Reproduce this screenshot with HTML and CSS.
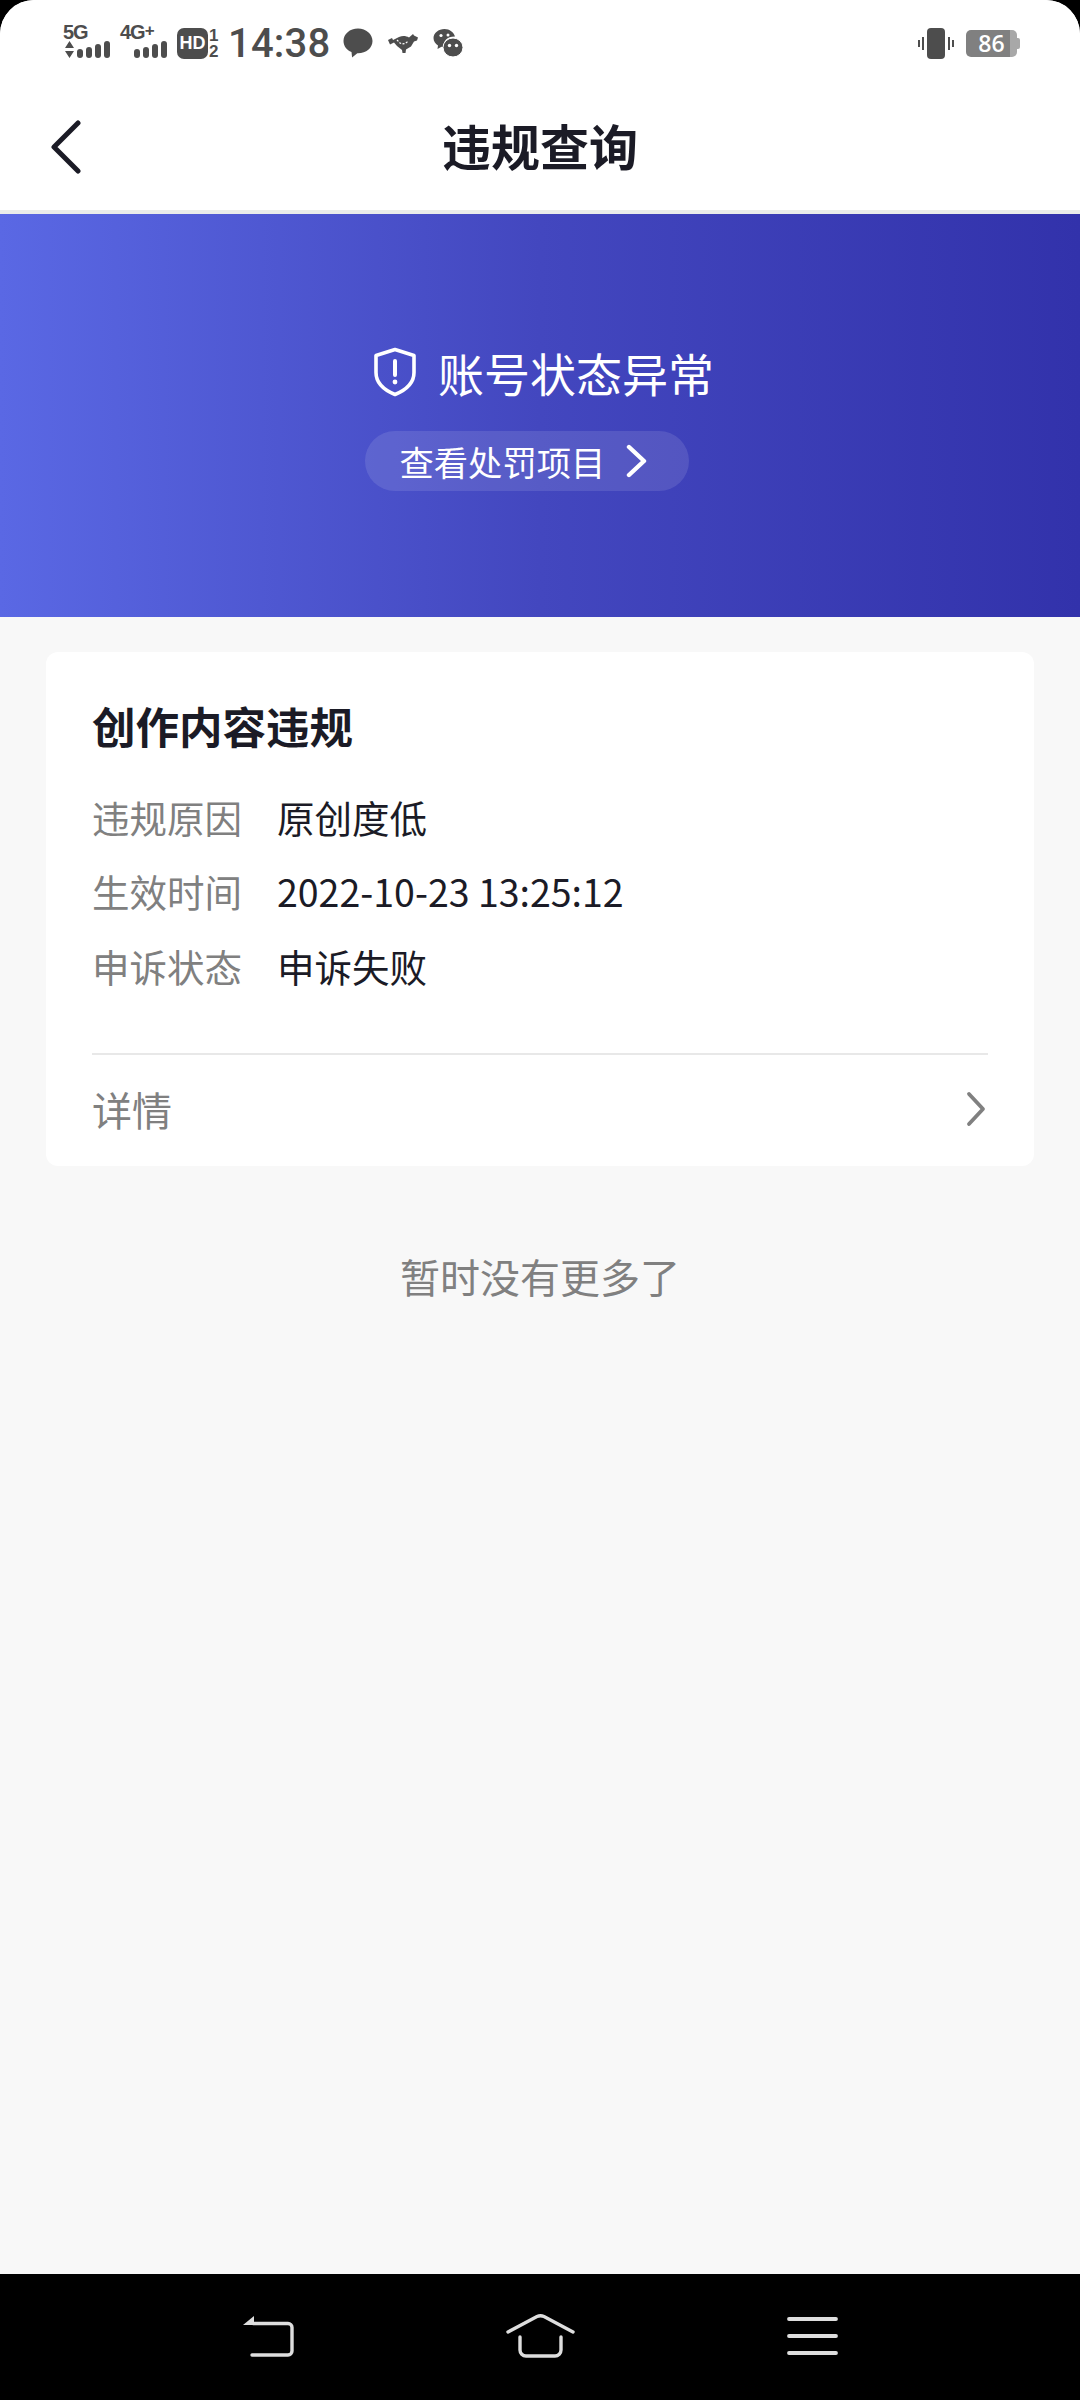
FILE: index.html
```html
<!DOCTYPE html>
<html lang="zh-CN">
<head>
    <meta charset="UTF-8">
    <meta name="viewport" content="width=device-width, initial-scale=1.0">
    <title>违规查询</title>
    <link rel="stylesheet" href="styles.css">
</head>
<body>
    <div class="screen">
        <div class="status-bar">
            <div class="status-left">
                <div class="signal signal-5g">
                    <span class="net">5G</span>
                    <div class="bars">
                        <svg class="updown" width="9" height="17" viewBox="0 0 9 17"><path d="M4.500 0L9 7H0zM0 10h9l-4.500 7z" fill="#4d4d4d"/></svg>
                        <i class="b1"></i><i class="b2"></i><i class="b3"></i><i class="b4"></i>
                    </div>
                </div>
                <div class="signal signal-4g">
                    <span class="net">4G<sup>+</sup></span>
                    <div class="bars">
                        <i class="b1"></i><i class="b2"></i><i class="b3"></i><i class="b4"></i>
                    </div>
                </div>
                <span class="hd">HD</span>
                <div class="sim"><span>1</span><span>2</span></div>
                <span class="time">14:38</span>
                <svg class="note-icon bubble" width="30" height="30" viewBox="0 0 30 30"><path d="M15 .5C6.800.5.500 6 .500 13c0 5 3.200 9 8 11l.6 5.500 5.200-4.200h.700c8.200 0 14.500-5.400 14.500-12.300S23.200.5 15 .5z" fill="#4d4d4d"/></svg>
                <svg class="note-icon hand" width="30" height="22" viewBox="0 0 30 22"><path d="M0 7l4-2 1 2 6-3c4-1.500 7-1 10 .5L25 1l1 1.500 4 2-1 3-3 1-3 5-5 3-.5 3.500h-3L14 17l-5-4-3-3.500-4 2z" fill="#4d4d4d"/><path d="M9 7l3 3 2 1 3-.5 3-2" fill="none" stroke="#fff" stroke-width="1.200" stroke-dasharray="2 1.500"/></svg>
                <svg class="note-icon wechat" width="30" height="30" viewBox="0 0 30 30"><path d="M11.500 1C5.500 1 .5 5 .5 10c0 3 1.800 5.600 4.500 7.400L4.500 21l4-2.200c.7.200 1.500.3 2.400.3C10 13 14 8.500 22 8.600 20.800 4.200 16.600 1 11.500 1z" fill="#4d4d4d"/><ellipse cx="20" cy="19.500" rx="10" ry="9.500" fill="#4d4d4d" stroke="#fff" stroke-width="1"/><circle cx="16.500" cy="17.500" r="1.700" fill="#fff"/><circle cx="23.500" cy="17.500" r="1.700" fill="#fff"/><circle cx="8" cy="7.500" r="1.600" fill="#fff"/><circle cx="15" cy="7" r="1.500" fill="#fff"/></svg>
            </div>
            <div class="status-right">
                <svg width="36" height="31" viewBox="0 0 36 31"><rect x="9" y="0" width="18" height="31" rx="4" fill="#4d4d4d"/><path d="M5 9v13M1 12v7M31 9v13M35 12v7" stroke="#4d4d4d" stroke-width="2" fill="none"/></svg>
                <div class="battery"><span class="battery-num">86</span><i class="battery-cap"></i></div>
            </div>
        </div>

        <div class="title-bar">
            <svg class="back" width="32" height="54" viewBox="0 0 32 54"><path d="M28 3L4 27l24 24" fill="none" stroke="#1b1b26" stroke-width="5" stroke-linecap="round" stroke-linejoin="round"/></svg>
            <h1>违规查询</h1>
        </div>

        <div class="banner">
            <div class="banner-title">
                <svg width="44" height="50" viewBox="0 0 44 50"><path d="M22 2.500l19 6v17c0 10-8 17.500-19 22-11-4.500-19-12-19-22v-17z" fill="none" stroke="#fff" stroke-width="3.600" stroke-linejoin="round"/><path d="M22 14v14" stroke="#fff" stroke-width="4" stroke-linecap="round"/><circle cx="22" cy="35" r="2.400" fill="#fff"/></svg>
                <span>账号状态异常</span>
            </div>
            <div class="banner-pill">
                <span>查看处罚项目</span>
                <svg width="22" height="34" viewBox="0 0 22 34"><path d="M3 3l15 14L3 31" fill="none" stroke="#fff" stroke-width="4.400" stroke-linecap="round" stroke-linejoin="round"/></svg>
            </div>
        </div>

        <div class="content">
            <div class="card">
                <div class="card-body">
                    <h2>创作内容违规</h2>
                    <div class="row"><span class="label">违规原因</span><span class="value">原创度低</span></div>
                    <div class="row"><span class="label">生效时间</span><span class="value">2022-10-23 13:25:12</span></div>
                    <div class="row"><span class="label">申诉状态</span><span class="value">申诉失败</span></div>
                </div>
                <div class="card-foot">
                    <span>详情</span>
                    <svg class="foot-arrow" width="20" height="36" viewBox="0 0 20 36"><path d="M3 3l14 15L3 33" fill="none" stroke="#808080" stroke-width="3.800" stroke-linecap="round" stroke-linejoin="round"/></svg>
                </div>
            </div>
            <p class="no-more">暂时没有更多了</p>
        </div>

        <div class="nav-bar">
            <svg width="51" height="41" viewBox="0 0 51 41"><path d="M0 9L11 0v9z" fill="#dedede"/><path d="M10 7.500h35a4 4 0 0 1 4 4V35a4 4 0 0 1-4 4H9" fill="none" stroke="#dedede" stroke-width="3.400" stroke-linecap="round"/></svg>
            <svg width="69" height="44" viewBox="0 0 69 44"><path d="M2 18L31 2.500q3.500-1.500 7 0L67 18" fill="none" stroke="#dedede" stroke-width="3.400" stroke-linecap="round"/><path d="M14 23v13a6 6 0 0 0 6 6h29a6 6 0 0 0 6-6V23" fill="none" stroke="#dedede" stroke-width="3.400" stroke-linecap="round"/></svg>
            <svg width="51" height="38" viewBox="0 0 51 38"><path d="M2 2h47M2 19h47M2 36h47" fill="none" stroke="#dedede" stroke-width="3.800" stroke-linecap="round"/></svg>
        </div>
    </div>
</body>
</html>
```

FILE: styles.css
```css
* {
    box-sizing: border-box;
}
html, body {
    margin: 0;
    padding: 0;
    background-color: #000;
}
body {
    font-family: "Noto Sans CJK SC", "Noto Sans", sans-serif;
    color: #1b1b26;
}
.screen {
    width: 1080px;
    height: 2400px;
    display: flex;
    flex-direction: column;
    background-color: #f8f8f8;
    border-radius: 34px 34px 0 0;
    overflow: hidden;
}

/* status bar */
.status-bar {
    height: 85px;
    background-color: #fff;
    display: flex;
    justify-content: space-between;
    align-items: flex-start;
    padding: 22px 63px 0 63px;
    color: #4d4d4d;
}
.status-left {
    display: flex;
    align-items: flex-start;
}
.status-right {
    display: flex;
    align-items: center;
    gap: 12px;
    padding-top: 6px;
}
.signal {
    display: flex;
    flex-direction: column;
    width: 47px;
    font-family: "Liberation Sans", Arial, sans-serif;
    font-weight: 700;
}
.signal-4g {
    margin-left: 10px;
}
.net {
    font-size: 20px;
    letter-spacing: -1px;
    line-height: 17px;
    height: 17px;
    margin-top: 2px;
    white-space: nowrap;
}
.net sup {
    font-size: 17px;
    line-height: 0;
    vertical-align: 3px;
}
.bars {
    display: flex;
    align-items: flex-end;
    justify-content: flex-end;
    gap: 3px;
    height: 17px;
}
.bars i {
    display: block;
    width: 6px;
    background-color: #4d4d4d;
    border-radius: 3px;
}
.bars .b1 { height: 9px; }
.bars .b2 { height: 11px; }
.bars .b3 { height: 14px; }
.bars .b4 { height: 17px; }
.hd {
    width: 31px;
    height: 31px;
    margin-left: 10px;
    margin-top: 6px;
    border-radius: 7px;
    background-color: #4d4d4d;
    color: #fff;
    font-family: "Liberation Sans", Arial, sans-serif;
    font-weight: 700;
    font-size: 18px;
    line-height: 31px;
    text-align: center;
}
.sim {
    display: flex;
    flex-direction: column;
    margin: 6px 0 0 1px;
    width: 11px;
    font-family: "Liberation Sans", Arial, sans-serif;
    font-weight: 700;
    font-size: 17px;
    line-height: 15.500px;
}
.time {
    font-family: Roboto, sans-serif;
    font-weight: 500;
    font-size: 40px;
    letter-spacing: 0.200px;
    line-height: 44px;
    margin-left: 8px;
    width: 101px;
    white-space: nowrap;
}
.note-icon {
    margin-top: 6px;
}
.bubble {
    margin-left: 14px;
}
.hand {
    margin-left: 15px;
    margin-top: 11px;
}
.wechat {
    margin-left: 15px;
}
.battery {
    position: relative;
    width: 51px;
    height: 27px;
    border-radius: 5px;
    background: linear-gradient(to right, #808080 0, #808080 86%, #a8a8a8 86%);
    color: #fff;
    text-align: center;
    font-family: "Open Sans", sans-serif;
    font-weight: 600;
    font-size: 23px;
    line-height: 27px;
}
.battery-cap {
    position: absolute;
    right: -3px;
    top: 8px;
    width: 3px;
    height: 11px;
    border-radius: 0 2px 2px 0;
    background-color: #a8a8a8;
}

/* title */
.title-bar {
    height: 129px;
    background-color: #fff;
    border-bottom: 4px solid #eaecea;
    display: flex;
    align-items: center;
    justify-content: center;
    position: relative;
}
.title-bar h1 {
    margin: 0 0 6px;
    font-size: 49px;
    font-weight: 700;
    line-height: 60px;
}
.back {
    position: absolute;
    left: 50px;
    top: 35px;
}

/* banner */
.banner {
    height: 403px;
    background: linear-gradient(to right, #5a68e4 0, #4347bf 50%, #3232ab 100%);
    color: #fff;
    display: flex;
    flex-direction: column;
    align-items: center;
    padding-top: 128px;
}
.banner-title {
    display: flex;
    align-items: center;
    gap: 21px;
    font-size: 46px;
    line-height: 60px;
    margin-left: 7px;
}
.banner-pill {
    display: flex;
    align-items: center;
    gap: 21px;
    width: 324px;
    height: 60px;
    margin: 29px 27px 0 0;
    padding-left: 35px;
    border-radius: 30px;
    background-color: rgba(255, 255, 255, 0.11);
    font-size: 34.300px;
}

/* card */
.content {
    flex: 1;
    padding: 35px 46px 0;
}
.card {
    background-color: #fff;
    border-radius: 12px;
    height: 514px;
    padding: 0 46px;
}
.card-body {
    height: 403px;
    padding-top: 44px;
    border-bottom: 2px solid #e8e8e8;
}
.card-body h2 {
    margin: 0 0 23px;
    font-size: 43.500px;
    font-weight: 700;
    line-height: 60px;
}
.row {
    display: flex;
    height: 74.500px;
    align-items: center;
    font-size: 37.500px;
}
.label {
    width: 185px;
    color: #808080;
}
.value {
    color: #1b1b26;
}
.card-foot {
    height: 109px;
    display: flex;
    align-items: center;
    justify-content: space-between;
    font-size: 40px;
    color: #808080;
    padding-bottom: 2px;
}
.foot-arrow {
    margin-right: 2px;
}
.no-more {
    margin: 80px 0 0;
    text-align: center;
    font-size: 40px;
    line-height: 60px;
    color: #808080;
}

/* system nav */
.nav-bar {
    height: 126px;
    background-color: #000;
    display: flex;
    align-items: center;
    padding: 0 0 2px 243px;
    gap: 212px;
}
```
